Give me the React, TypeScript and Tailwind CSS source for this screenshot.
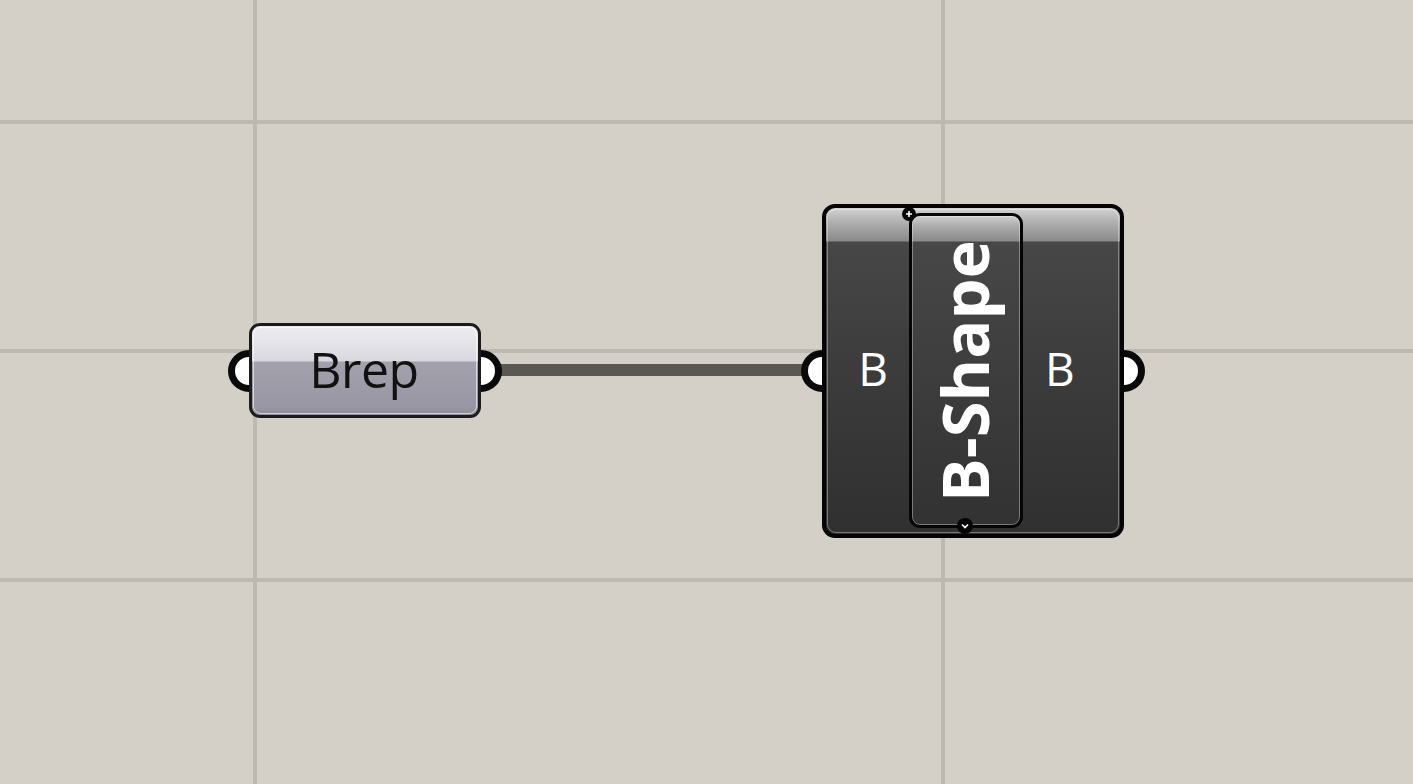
import React from "react";

function Grip({ side }: { side: "left" | "right" }) {
  return (
    <div
      className={
        "shrink-0 w-[42px] h-[42px] rounded-full border-[7px] border-[#0a0a0a] bg-white " +
        (side === "left" ? "-mr-[21px]" : "-ml-[21px]")
      }
    />
  );
}

export default function App() {
  return (
    <div className="relative w-[1413px] h-[784px] overflow-hidden bg-[#d4d0c8] font-['Open_Sans','Noto_Sans',sans-serif] bg-[linear-gradient(90deg,transparent_253px,#bdb8b0_253px,#bdb8b0_257px,transparent_257px,transparent_941px,#bdb8b0_941px,#bdb8b0_945px,transparent_945px),linear-gradient(180deg,transparent_120px,#bdb8b0_120px,#bdb8b0_124px,transparent_124px,transparent_349px,#bdb8b0_349px,#bdb8b0_353px,transparent_353px,transparent_578px,#bdb8b0_578px,#bdb8b0_582px,transparent_582px)]">
      {/* wire */}
      <div className="absolute left-[490px] top-[364px] w-[330px] h-[12px] bg-[#595853]" />

      {/* Brep param node */}
      <div className="absolute left-[228px] top-[323px] flex items-center">
        <Grip side="left" />
        <div className="relative z-10 w-[232px] h-[95px] rounded-[11px] border-[3px] border-[#1c1c1c] overflow-hidden bg-[linear-gradient(180deg,#ededf1_0px,#d9d8df_35px,#a2a1ac_36px,#9897a3_80px,#8d8c98_100%)]">
          <div className="absolute inset-[1px] rounded-[8px] border-[1.5px] border-white/60" />
          <div className="relative flex h-full items-center justify-center pb-[4px] pr-[2px] text-[50px] leading-none text-[#111] tracking-[-0.5px]">
            Brep
          </div>
        </div>
        <Grip side="right" />
      </div>

      {/* B-Shape component node */}
      <div className="absolute left-[801px] top-[204px] flex items-center">
        <Grip side="left" />
        <div className="relative z-10 w-[302px] h-[334px] rounded-[13px] border-[4px] border-[#050505] bg-[linear-gradient(180deg,#d3d3d3_0px,#b0b0b0_14px,#8a8a8a_33px,#474747_34px,#3c3c3c_160px,#303030_100%)]">
          <div className="absolute inset-[1px] rounded-[9px] border-[1.5px] border-white/35" />
          <div className="relative flex h-full">
            <div className="flex w-[83px] items-center justify-end pr-[21px] pb-[6px] text-[46px] leading-none text-white">
              B
            </div>
            <div className="relative mt-[5px] mb-[6px] w-[114px]">
              <div className="h-full rounded-[11px] border-[3px] border-[#050505] overflow-hidden bg-[linear-gradient(180deg,#cfcfcf_0px,#acacac_10px,#8a8a8a_25px,#474747_26px,#3e3e3e_150px,#323232_100%)]">
                <div className="relative flex h-full items-center justify-center rounded-[8px] border-[1.5px] border-white/35">
                  <span className="[writing-mode:vertical-rl] rotate-180 text-[65px] font-bold leading-none text-white pl-[4px]">
                    B-Shape
                  </span>
                </div>
              </div>
              {/* add-parameter badge */}
              <div className="absolute -left-[7px] -top-[6px] w-[14px] h-[14px] rounded-full bg-[#050505] flex items-center justify-center">
                <svg width="8" height="8" viewBox="0 0 8 8">
                  <path d="M4 1v6M1 4h6" stroke="white" strokeWidth="1.6" />
                </svg>
              </div>
              {/* expand badge */}
              <div className="absolute left-[48px] -bottom-[6px] w-[16px] h-[16px] rounded-full bg-[#050505] flex items-center justify-center">
                <svg width="8" height="6" viewBox="0 0 8 6">
                  <path d="M1 1.5l3 3 3-3" stroke="white" strokeWidth="1.6" fill="none" />
                </svg>
              </div>
            </div>
            <div className="flex flex-1 items-center justify-start pl-[22px] pb-[6px] text-[46px] leading-none text-white">
              B
            </div>
          </div>
        </div>
        <Grip side="right" />
      </div>
    </div>
  );
}
